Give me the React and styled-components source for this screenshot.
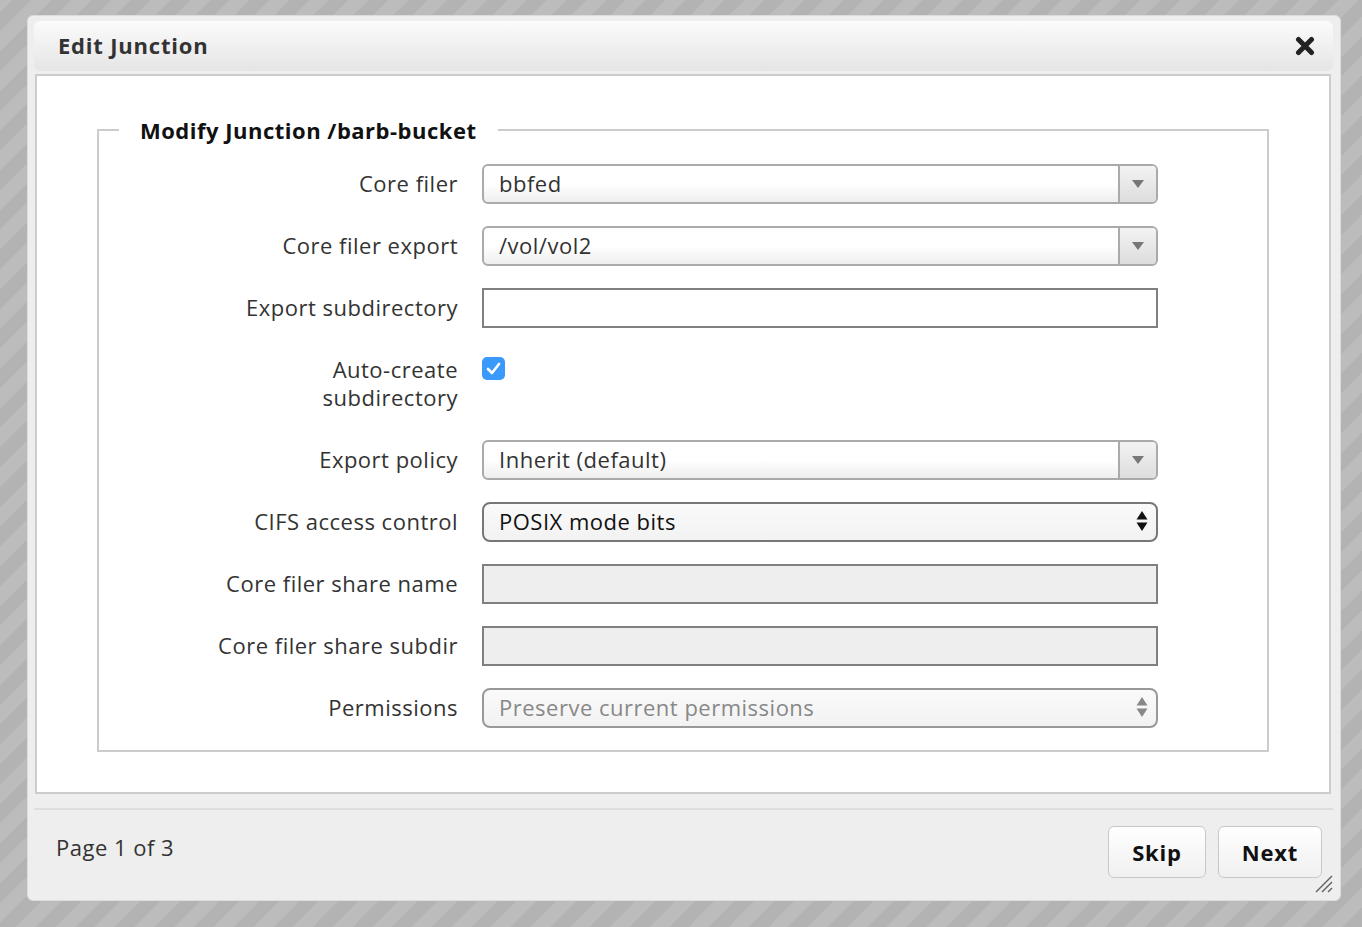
import React from 'react';
import styled, { createGlobalStyle } from 'styled-components';

const GlobalStyle = createGlobalStyle`
  html, body {
    margin: 0;
    padding: 0;
  }
  body {
    font-family: "Open Sans", "Noto Sans", sans-serif;
    letter-spacing: 0.5px;
    background: repeating-linear-gradient(
      -45deg,
      #b3b3b3 0px,
      #b3b3b3 14px,
      #bcbcbc 14px,
      #bcbcbc 28px
    );
    min-height: 927px;
  }
`;

const Page = styled.div`
  padding: 15px 0 0 27px;
  height: 927px;
  box-sizing: border-box;
`;

const Dialog = styled.div`
  position: relative;
  width: 1314px;
  height: 886px;
  box-sizing: border-box;
  background: #eeeeee;
  border: 1px solid #dcdcdc;
  border-radius: 6px;
  padding: 5px 7px 0 6px;
  display: flex;
  flex-direction: column;
`;

const TitleBar = styled.div`
  height: 50px;
  border-radius: 6px;
  background: linear-gradient(#fbfbfb, #e5e5e5);
  display: flex;
  align-items: center;
  justify-content: space-between;
  padding: 0 16px 0 24px;
`;

const Title = styled.h1`
  margin: 0 0 2px;
  font-size: 22px;
  letter-spacing: 0.8px;
  font-weight: 700;
  color: #333;
`;

const CloseButton = styled.button`
  border: none;
  background: none;
  padding: 0;
  width: 24px;
  height: 24px;
  display: flex;
  align-items: center;
  justify-content: center;
  cursor: pointer;
`;

const Content = styled.div`
  margin: 3px 2px 0 1px;
  height: 720px;
  box-sizing: border-box;
  background: #fff;
  border: 2px solid #cccccc;
  padding: 40px 60px 0 60px;
`;

const FieldSet = styled.fieldset`
  margin: 0;
  border: 2px solid #cccccc;
  padding: 20px 0 22px 20px;
`;

const Legend = styled.legend`
  margin-left: 0;
  padding: 0 21px;
  font-size: 22px;
  letter-spacing: 0.5px;
  line-height: 28px;
  font-weight: 700;
  color: #111;
`;

const Form = styled.div`
  display: grid;
  grid-template-columns: 339px 676px;
  column-gap: 24px;
  row-gap: 22px;
`;

const Label = styled.label`
  text-align: right;
  font-size: 22px;
  line-height: 28px;
  color: #333;
  padding: 5px 0 7px;
`;

const ComboBox = styled.div`
  height: 40px;
  box-sizing: border-box;
  border: 2px solid #aaaaaa;
  border-radius: 6px;
  background: linear-gradient(#ffffff 50%, #eeeeee);
  display: flex;
  overflow: hidden;
`;

const ComboValue = styled.div`
  flex: 1;
  padding-left: 15px;
  font-size: 22px;
  line-height: 34px;
  color: #333;
`;

const ComboArrow = styled.div`
  width: 36px;
  border-left: 2px solid #aaaaaa;
  background: linear-gradient(#f3f3f3, #dddddd);
  display: flex;
  align-items: center;
  justify-content: center;
`;

const Select = styled.div`
  height: 40px;
  box-sizing: border-box;
  border: 2px solid ${p => (p.disabled ? '#999999' : '#777777')};
  border-radius: 8px;
  background: linear-gradient(#fafafa, #f2f2f2);
  display: flex;
  align-items: center;
  justify-content: space-between;
  padding: 0 8px 2px 15px;
  font-size: 22px;
  color: ${p => (p.disabled ? '#888888' : '#111111')};
`;

const TextInput = styled.input`
  height: 40px;
  width: 676px;
  box-sizing: border-box;
  border: 2px solid #808080;
  border-radius: 0;
  background: ${p => (p.disabled ? '#eeeeee' : '#ffffff')};
  font-family: inherit;
  font-size: 22px;
  padding: 0 15px;
  outline: none;
`;

const CheckCell = styled.div`
  padding-top: 7px;
`;

const CheckBox = styled.span`
  display: flex;
  align-items: center;
  justify-content: center;
  width: 23px;
  height: 23px;
  border-radius: 5px;
  background: #3b99fc;
`;

const Footer = styled.div`
  margin-top: 14px;
  border-top: 2px solid #dddddd;
  flex: 1;
  display: flex;
  align-items: flex-start;
  justify-content: space-between;
  padding: 16px 11px 0 22px;
`;

const PageInfo = styled.div`
  font-size: 22px;
  color: #333;
  margin-top: 6px;
`;

const Buttons = styled.div`
  display: flex;
  gap: 12px;
`;

const Button = styled.button`
  height: 52px;
  min-width: ${p => p.$w}px;
  box-sizing: border-box;
  border: 1px solid #c8c8c8;
  border-radius: 6px;
  background: linear-gradient(#ffffff, #f0f0f0);
  font-family: inherit;
  font-size: 22px;
  letter-spacing: 0.8px;
  font-weight: 700;
  color: #111;
  padding-bottom: 2px;
  cursor: pointer;
`;

const Grip = styled.svg`
  position: absolute;
  right: 7px;
  bottom: 7px;
`;

const DownArrow = () => (
  <svg width="12" height="8" viewBox="0 0 12 8">
    <path d="M0 0h12L6 8z" fill="#777" />
  </svg>
);

const UpDown = ({ color }) => (
  <svg width="12" height="22" viewBox="0 0 12 22">
    <path d="M6 1l5.5 8.5h-11z" fill={color} />
    <path d="M6 21l5.5-8.5h-11z" fill={color} />
  </svg>
);

const Combo = ({ value }) => (
  <ComboBox>
    <ComboValue>{value}</ComboValue>
    <ComboArrow>
      <DownArrow />
    </ComboArrow>
  </ComboBox>
);

export default function App() {
  return (
    <>
      <GlobalStyle />
      <Page>
        <Dialog>
          <TitleBar>
            <Title>Edit Junction</Title>
            <CloseButton aria-label="Close">
              <svg width="20" height="20" viewBox="0 0 20 20">
                <path d="M3.5 3.5l13 13M16.5 3.5l-13 13" stroke="#222" strokeWidth="5" strokeLinecap="round" />
              </svg>
            </CloseButton>
          </TitleBar>
          <Content>
            <FieldSet>
              <Legend>Modify Junction /barb-bucket</Legend>
              <Form>
                <Label>Core filer</Label>
                <Combo value="bbfed" />

                <Label>Core filer export</Label>
                <Combo value="/vol/vol2" />

                <Label>Export subdirectory</Label>
                <TextInput type="text" defaultValue="" />

                <Label>Auto-create<br />subdirectory</Label>
                <CheckCell>
                  <CheckBox>
                    <svg width="15" height="13" viewBox="0 0 15 13">
                      <path d="M2 7l4 4 7-9" stroke="#fff" strokeWidth="2.6" fill="none" strokeLinecap="round" strokeLinejoin="round" />
                    </svg>
                  </CheckBox>
                </CheckCell>

                <Label>Export policy</Label>
                <Combo value="Inherit (default)" />

                <Label>CIFS access control</Label>
                <Select>
                  <span>POSIX mode bits</span>
                  <UpDown color="#111" />
                </Select>

                <Label>Core filer share name</Label>
                <TextInput type="text" disabled />

                <Label>Core filer share subdir</Label>
                <TextInput type="text" disabled />

                <Label>Permissions</Label>
                <Select disabled>
                  <span>Preserve current permissions</span>
                  <UpDown color="#888" />
                </Select>
              </Form>
            </FieldSet>
          </Content>
          <Footer>
            <PageInfo>Page 1 of 3</PageInfo>
            <Buttons>
              <Button $w={98}>Skip</Button>
              <Button $w={104}>Next</Button>
            </Buttons>
          </Footer>
          <Grip width="21" height="21" viewBox="0 0 21 21">
            <path d="M20 4L4 20M20 10L10 20M20 16L16 20" stroke="#666" strokeWidth="1.5" />
          </Grip>
        </Dialog>
      </Page>
    </>
  );
}
